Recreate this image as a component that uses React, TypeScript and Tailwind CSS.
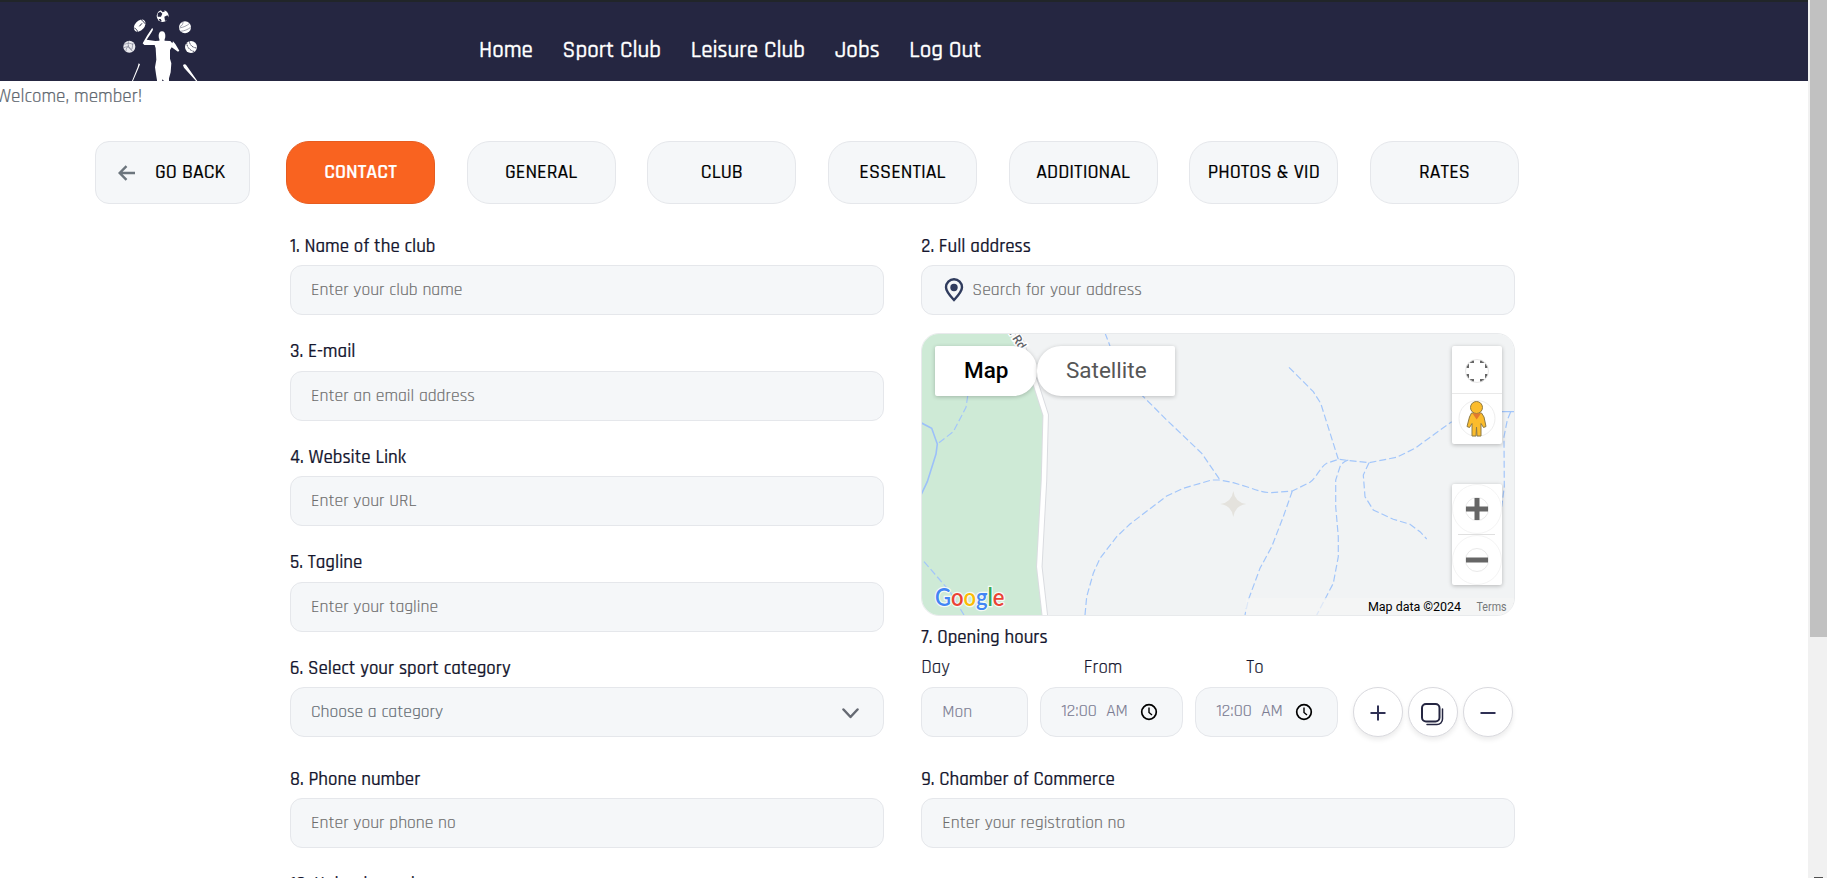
import type { ReactNode } from 'react';

const navItems = ['Home', 'Sport Club', 'Leisure Club', 'Jobs', 'Log Out'];
const tabs = ['CONTACT', 'GENERAL', 'CLUB', 'ESSENTIAL', 'ADDITIONAL', 'PHOTOS & VID', 'RATES'];

function Logo() {
  return (
    <svg className="ml-[110px] h-[79px] w-[100px] shrink-0" viewBox="0 6 300 237" fill="#fff">
      <circle cx="158" cy="48" r="18" />
      <g fill="#252641">
        <path d="M143 40l8-5 6 6-4 9-10 0zM163 50l9-4 5 6-4 10-8 0zM152 30l10-1 3 5-7 3zM146 57l6 0 3 6-4 2z" />
      </g>
      <ellipse cx="89" cy="77" rx="21" ry="14" transform="rotate(-48 89 77)" />
      <path d="M93 58c6 5 8 8 12 13M73 84c6 3 8 6 10 11M88 79l8-9" stroke="#252641" strokeWidth="3" fill="none" />
      <circle cx="225" cy="82" r="18" />
      <path d="M208 84c12-2 22-6 31-14M211 94c12-1 22-5 31-12M219 65c0 8-3 12-9 15" stroke="#6d6e82" strokeWidth="2" fill="none" />
      <circle cx="58" cy="140" r="18" fill="#e9e9ee" />
      <path d="M43 134c8-5 18-6 26 0M42 143c10-5 18-3 24 8M56 124c-4 12 0 22 12 30M48 153c0-7 3-12 9-17M69 129l-3 18" stroke="#797a8d" strokeWidth="2" fill="none" />
      <circle cx="243" cy="141" r="18" />
      <path d="M230 129c1 13 10 23 24 26M238 124c1 10 9 19 22 20" stroke="#252641" strokeWidth="2.5" strokeDasharray="4 1.5" fill="none" />
      <ellipse cx="156" cy="108" rx="10" ry="14" />
      <path d="M127 83l2 6-6 11-13 19 26 4 12-1 2-8h12l2 8 17 1 6 7 2-6 7 8 12 20-4 3-19-13-5 8 0 26 4 14-2 27-5 18 0 18h-13l-1-9-6-6-2 15h-12l-5-30-3-21 4-23-2-34-3-10-31 0-5-5 14-24 9-14z" />
      <path d="M86 190l4 3-4 10-17 40h-3l17-42z" />
      <path d="M219 196c2-4 8-4 10 0l33 47h-4l-36-40z" />
    </svg>
  );
}

function Label({ children }: { children: ReactNode }) {
  return <label className="mb-[6.500px] block h-6 text-[18.900px] leading-6 font-medium text-[#16172f] [-webkit-text-stroke:.2px]">{children}</label>;
}

const box =
  'w-full h-[50px] border border-[#e5e7eb] bg-[#f5f7f9] rounded-[12px] px-5 text-[17.6px] placeholder-[#6d6d6d] [-webkit-text-stroke:.15px] outline-none block';

function Field({ label, placeholder }: { label: string; placeholder: string }) {
  return (
    <div className="h-[105.5px]">
      <Label>{label}</Label>
      <input className={box} placeholder={placeholder} />
    </div>
  );
}

function MapCanvas() {
  return (
    <svg className="-m-px block h-[283px] w-[594px]" viewBox="0 0 594 283">
      <rect width="594" height="283" fill="#f1f3f4" />
      <path d="M0 0H89L113 52 122 82 121 147 116 234 121 283H0z" fill="#ceead6" />
      <path d="M97 0L115.7 53.7 124.7 82 123 147 118.3 233.7 124 284" fill="none" stroke="#dadce0" strokeWidth="6.5" strokeLinejoin="round" />
      <path d="M97 0L115.7 53.7 124.7 82 123 147 118.3 233.7 124 284" fill="none" stroke="#fff" strokeWidth="4.5" strokeLinejoin="round" />
      <text x="86" y="-3" transform="rotate(58 86 -3)" fontFamily="Roboto, sans-serif" fontSize="12" fontWeight="500" fill="#5f6368" stroke="#fff" strokeWidth="3" paintOrder="stroke">n Rd</text>
      <path d="M0 89.7L10.7 95.3 16.3 111 15 121 6.3 148.7 0 162" fill="none" stroke="#9cc0f9" strokeWidth="1.6" />
      <g fill="none" stroke="#a3c6fa" strokeWidth="1.2" strokeDasharray="7 3">
        <path d="M46.7 63L45 74.3 32.3 98.7 16.3 111" />
        <path d="M3 228.7L19 247 29 258.7 43 282" />
        <path d="M184 0L189 13 221.7 63 245.7 87 280.7 120.3 299 147" />
        <path d="M164 282L165.7 263.7 172.3 240.3 179 225.3 195.7 203.7 209 191 245.7 163 262.3 155.3 290.7 147 299 147 312.3 149.7 325.7 153.7C335 157 342 159.5 350.7 159.7L371.3 158 389 149.3C396 144 400 133 405.7 130.3L417.3 126.3 448 129.7 475.7 124.3 494 115.3 512.3 102 530.7 88.7" />
        <path d="M368 34.3L380.7 47 392.3 58.7 399.7 70.3 417.3 126.3" />
        <path d="M371.3 158L362.3 183.7 350.7 213.7 339 235.3 327.3 267 324 282" />
        <path d="M427.3 127Q421 129 419 133.7L414.7 147V173.7L417.3 203.7V223.7L412.3 250.3 395.7 282" />
        <path d="M448 129.7L442.3 142 444 163.7 452.3 177 472.3 186.3 489 191.3 499 198.7 505.7 206" />
        <path d="M589.7 78.7L586.3 87 583 103.7 583.3 153.7 580.7 173.7" />
      </g>
      <path d="M581 78.7H594" stroke="#a3c6fa" strokeWidth="1.2" />
      <path d="M312.3 158Q314 169.500 325.300 171 314 172.500 312.300 184 310.600 172.500 299.300 171 310.600 169.500 312.300 158z" fill="#e4e2dd" />
      <rect x="325" y="265" width="269" height="18" fill="#f5f5f5" opacity=".7" />
      <g fontFamily="Roboto, sans-serif">
        <text x="447" y="278" fontSize="12.500" textLength="93" lengthAdjust="spacing" fill="#000">Map data ©2024</text>
        <text x="555.500" y="278" fontSize="12" textLength="30" lengthAdjust="spacingAndGlyphs" fill="#77797b">Terms</text>
      </g>
      <text x="14" y="273" fontFamily="Lato, sans-serif" fontSize="24.500" fontWeight="600" textLength="69.500" lengthAdjust="spacingAndGlyphs" stroke="#fff" strokeWidth="2.500" strokeOpacity=".8" paintOrder="stroke">
        <tspan fill="#4285f4">G</tspan><tspan fill="#ea4335">o</tspan><tspan fill="#fbbc04">o</tspan><tspan fill="#4285f4">g</tspan><tspan fill="#34a853">l</tspan><tspan fill="#ea4335">e</tspan>
      </text>
    </svg>
  );
}

function MapControls() {
  return (
    <>
      <div className="absolute top-[12px] left-[13px] flex h-[50px] font-[Roboto] text-[22.5px]">
        <div className="flex w-[102px] items-center justify-center rounded-l-[2px] rounded-r-[24px] bg-white font-medium text-black shadow-[0_1px_4px_rgba(0,0,0,.22)]">Map</div>
        <div className="flex w-[138px] items-center justify-center rounded-l-[24px] rounded-r-[2px] bg-white text-[#565656] shadow-[0_1px_4px_rgba(0,0,0,.22)]">Satellite</div>
      </div>
      <div className="absolute top-[12px] left-[530px] h-[98px] w-[50px] rounded-[2px] bg-white shadow-[0_1px_4px_rgba(0,0,0,.25)]">
        <svg className="block h-full w-full" viewBox="0 0 50 98" fill="none">
          <clipPath id="ring">
            <circle cx="25" cy="25" r="11.500" />
          </clipPath>
          <path d="M15.500 22V15.500H22M28 15.500H34.500V22M34.500 28V34.500H28M22 34.500H15.500V28" stroke="#666" strokeWidth="3" clipPath="url(#ring)" />
          <circle cx="25" cy="25" r="11.500" stroke="#e6e6e6" />
          <path d="M0 47.500h50" stroke="#e9e9e9" />
          <circle cx="25" cy="72.500" r="18" stroke="#eee" />
          <g fill="#fbbc2c" stroke="#8d7a45" strokeWidth="1">
            <path d="M19.500 67h10l2.500 4 2 9.500-2.500 1-2.500-4v12.500h-4l-.5-9-.5 9h-4v-12.500l-2.500 4-2.500-1 2.500-9.500z" />
            <circle cx="24.500" cy="61.500" r="6" />
          </g>
          <path d="M20.500 67.500h8.500l-4.300 6z" fill="#e37a2e" />
        </svg>
      </div>
      <div className="absolute top-[150px] left-[530px] h-[101px] w-[50px] rounded-[2px] bg-white shadow-[0_1px_4px_rgba(0,0,0,.25)]">
        <svg className="block h-full w-full" viewBox="0 0 50 101" fill="none">
          <circle cx="25" cy="25" r="24.500" stroke="#f4f4f4" />
          <circle cx="25" cy="76" r="24.500" stroke="#f4f4f4" />
          <circle cx="25" cy="25" r="11.500" stroke="#e9e9e9" />
          <circle cx="25" cy="76" r="11.500" stroke="#e9e9e9" />
          <path d="M6 50.500h37" stroke="#e0e0e0" />
          <path d="M14 25h22M25 14v22M14 76h22" stroke="#666" strokeWidth="5" />
        </svg>
      </div>
    </>
  );
}

function TimeBox() {
  return (
    <div className="flex h-[50px] w-[143px] items-center rounded-[16px] border border-[#e5e7eb] bg-[#f5f7f9] pl-5 text-[17.6px] text-[#7b7c92] [-webkit-text-stroke:.15px]">
      <span className="w-[66px] pb-[1px] whitespace-pre">12:00  AM</span>
      <svg className="ml-[12.500px]" width="18" height="18" viewBox="0 0 18 18" fill="none" stroke="#000">
        <circle cx="9" cy="9" r="7.300" strokeWidth="1.700" />
        <path d="M9 4.500V9.500L12 12" strokeWidth="1.400" />
      </svg>
    </div>
  );
}

function RoundButton({ children }: { children: ReactNode }) {
  return (
    <button className="flex h-[50px] w-[50px] items-center justify-center rounded-full border border-[#d9d9de] bg-white shadow-[0_3px_5px_rgba(0,0,0,.08)]">
      {children}
    </button>
  );
}

export default function App() {
  return (
    <div className="flex h-[878px] w-[1827px] overflow-hidden bg-white font-[Rajdhani,'Roboto_Condensed',sans-serif]">
      <div className="w-[1808px] shrink-0">
        <header className="flex h-[81px] border-t-2 border-[#212529] bg-[#252641]">
          <Logo />
          <nav className="ml-[269px] flex gap-[29.700px] pt-[35px] text-[23.040px] leading-[28px] font-medium text-white [-webkit-text-stroke:.3px]">
            {navItems.map((n) => (
              <a key={n}>{n}</a>
            ))}
          </nav>
        </header>
        <p className="-ml-1 h-[60px] pt-[4px] text-[19.040px] leading-6 text-[#5f6870] [-webkit-text-stroke:.2px]">Welcome, member!</p>
        <div className="flex h-[63px] pl-[95px] text-[20px] leading-[26px] font-medium text-black [-webkit-text-stroke:.2px]">
          <button className="flex w-[155px] items-center rounded-[14px] border border-[#e5e7eb] bg-[#f5f7f9] pl-[22px]">
            <svg width="18" height="16" viewBox="0 0 18 16" fill="none" stroke="#6c757d" strokeWidth="2.400">
              <path d="M17 8H2M8.500 1.200L1.700 8l6.800 6.800" />
            </svg>
            <span className="ml-[19px] pb-[2px]">GO BACK</span>
          </button>
          <div className="ml-[36px] grid grid-cols-7 gap-[31.670px]">
            {tabs.map((t, i) => (
              <button
                key={t}
                className={
                  i === 0
                    ? 'w-[149px] rounded-[23px] border border-[#e65c20] bg-[#f96320] pb-[2px] font-semibold text-white'
                    : 'w-[149px] rounded-[23px] border border-[#e5e7eb] bg-[#f5f7f9] pb-[2px]'
                }
              >
                {t}
              </button>
            ))}
          </div>
        </div>
        <main className="mt-[30.500px] ml-[290px] grid w-[1225px] grid-cols-[594px_594px] gap-x-[37.300px]">
          <section>
            <Field label="1. Name of the club" placeholder="Enter your club name" />
            <Field label="3. E-mail" placeholder="Enter an email address" />
            <Field label="4. Website Link" placeholder="Enter your URL" />
            <Field label="5. Tagline" placeholder="Enter your tagline" />
            <div className="h-[111px]">
              <Label>6. Select your sport category</Label>
              <div className="flex h-[50px] items-center justify-between rounded-[14px] border border-[#e5e7eb] bg-[#f5f7f9] pr-6 pl-5 text-[17.600px] text-[#636b73] [-webkit-text-stroke:.15px]">
                <span>Choose a category</span>
                <svg className="mt-[2px]" width="17" height="11" viewBox="0 0 17 11" fill="none" stroke="#666a73" strokeWidth="2.500" strokeLinecap="round" strokeLinejoin="round">
                  <path d="M1.500 1.500l7 7.500 7-7.500" />
                </svg>
              </div>
            </div>
            <Field label="8. Phone number" placeholder="Enter your phone no" />
            <Label>10. Upload your logo</Label>
          </section>
          <section>
            <Label>2. Full address</Label>
            <div className="flex h-[50px] items-center rounded-[12px] border border-[#e5e7eb] bg-[#f5f7f9] pl-[21.700px] text-[17.600px] [-webkit-text-stroke:.15px]">
              <svg width="20" height="24" viewBox="0 0 20 24" fill="none" stroke="#303c5e" strokeWidth="2.400">
                <path d="M10 22C6 17.500 2 13.500 2 9.200a8 8 0 0 1 16 0C18 13.500 14 17.500 10 22z" />
                <circle cx="10" cy="9.500" r="3.700" fill="#303c5e" stroke="none" />
              </svg>
              <input className="ml-[8.300px] w-[400px] placeholder-[#6d6d6d] outline-none" placeholder="Search for your address" />
            </div>
            <div className="relative mt-[18px] h-[283px] overflow-hidden rounded-[18px] border border-[#e8eaec]">
              <MapCanvas />
              <MapControls />
            </div>
            <h3 className="mt-[9.500px] text-[18.900px] leading-6 font-medium text-[#16172f] [-webkit-text-stroke:.2px]">7. Opening hours</h3>
            <div className="mt-[6px] mb-[7.500px] flex text-[18.900px] leading-6 text-[#16172f] [-webkit-text-stroke:.2px]">
              <span className="w-[162.500px]">Day</span>
              <span className="w-[162.500px]">From</span>
              <span>To</span>
            </div>
            <div className="flex">
              <div className="flex h-[50px] w-[107px] items-center rounded-[12px] border border-[#e5e7eb] bg-[#f5f7f9] pl-5 text-[17.600px] text-[#7b7c92] [-webkit-text-stroke:.15px]">Mon</div>
              <div className="ml-[12px] flex gap-[12px]">
                <TimeBox />
                <TimeBox />
              </div>
              <div className="ml-[15px] flex gap-[5px]">
                <RoundButton>
                  <svg className="mt-px" width="16" height="16" viewBox="0 0 16 16" stroke="#2f3054" strokeWidth="2"><path d="M.5 8h15M8 .5v15" /></svg>
                </RoundButton>
                <RoundButton>
                  <svg className="mt-1 ml-[-1px]" width="23" height="23" viewBox="0 0 23 23" fill="none" stroke="#252641" strokeLinecap="round">
                    <rect x="1" y="1" width="17.500" height="17.500" rx="4" strokeWidth="2" />
                    <path d="M6 21.600h10a5.500 5.500 0 0 0 5.500-5.500V6" strokeWidth="1.500" />
                  </svg>
                </RoundButton>
                <RoundButton>
                  <svg className="mt-px" width="16" height="16" viewBox="0 0 16 16" stroke="#2f3054" strokeWidth="2"><path d="M.5 8h15" /></svg>
                </RoundButton>
              </div>
            </div>
            <div className="mt-[30.500px]">
              <Field label="9. Chamber of Commerce" placeholder="Enter your registration no" />
            </div>
          </section>
        </main>
      </div>
      <div className="flex h-full w-[19px] flex-col justify-between bg-[#f1f1f1] pl-[2px]">
        <div className="h-[637px] bg-[#c1c1c1]" />
        <div className="mx-1 h-px bg-[#505050]" />
      </div>
    </div>
  );
}
